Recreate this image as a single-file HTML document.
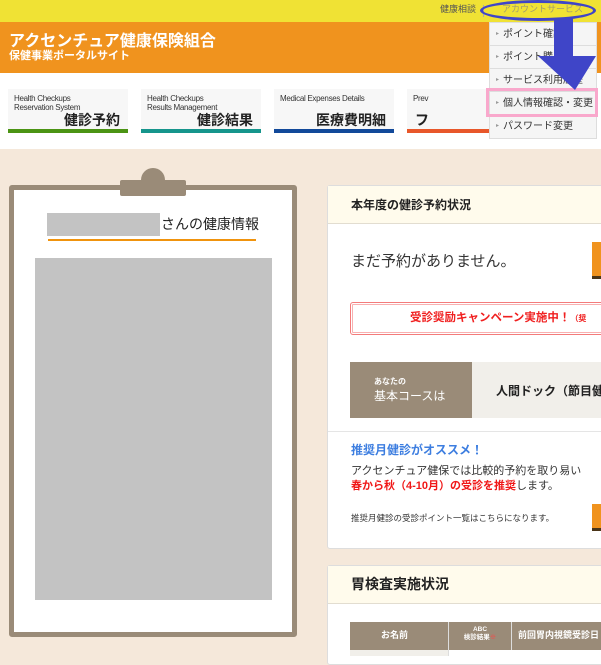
<!DOCTYPE html>
<html><head><meta charset="utf-8"><style>
*{margin:0;padding:0;box-sizing:border-box}
body{width:601px;height:656px;overflow:hidden;background:#f5e8da;font-family:"Liberation Sans","Noto Sans CJK JP",sans-serif;position:relative;color:#333;line-height:1.2}
.a{position:absolute;white-space:nowrap}
.card{position:absolute;top:89px;width:120px;height:44px;background:#f7f7f7;border-bottom:4px solid}
.card .en{position:absolute;left:6px;top:5px;font-size:8px;line-height:9px;color:#333;letter-spacing:-0.3px}
.card .jp{position:absolute;right:8px;top:23px;font-size:14px;line-height:16px;font-weight:bold;color:#222}
.dd{position:absolute;left:489px;top:22px;width:108px;background:#f5f5f5;border:1px solid #ddd}
.dd div{height:23px;border-bottom:1px solid #ddd;font-size:10px;line-height:22px;padding-left:6px;color:#333;white-space:nowrap;overflow:hidden}
.dd div:before{content:"▸";font-size:6px;color:#999;margin-right:4px;vertical-align:2px}
</style></head><body>
<div class="a" style="left:0;top:0;width:601px;height:22px;background:#f0e234"></div>
<div class="a" style="left:440px;top:4px;font-size:9px;color:#555">健康相談</div>
<div class="a" style="left:483px;top:5px;width:1px;height:12px;background:#aaa"></div>
<div class="a" style="left:502px;top:4px;font-size:9px;color:#a09a70">アカウントサービス</div>
<div class="a" style="left:0;top:22px;width:601px;height:51px;background:#f0931e"></div>
<div class="a" style="left:9px;top:32px;font-size:16px;line-height:19px;font-weight:bold;color:#fff">アクセンチュア健康保険組合</div>
<div class="a" style="left:9px;top:50px;font-size:11px;line-height:13px;font-weight:bold;color:#fff">保健事業ポータルサイト</div>
<div class="a" style="left:0;top:73px;width:601px;height:76px;background:#fff"></div>
<div class="card" style="left:8px;border-color:#4b9414"><div class="en">Health Checkups<br>Reservation System</div><div class="jp">健診予約</div></div>
<div class="card" style="left:141px;border-color:#16958c"><div class="en">Health Checkups<br>Results Management</div><div class="jp">健診結果</div></div>
<div class="card" style="left:274px;border-color:#12499a"><div class="en">Medical Expenses Details</div><div class="jp">医療費明細</div></div>
<div class="card" style="left:407px;border-color:#e8572a"><div class="en">Prev</div><div class="jp" style="left:8px;right:auto">フ</div></div>
<div class="dd"><div>ポイント確認</div><div>ポイント購入</div><div>サービス利用履歴</div><div>個人情報確認・変更</div><div style="border:none">パスワード変更</div></div>
<div class="a" style="left:486px;top:88px;width:112px;height:29px;border:3px solid #f9a8cc"></div>
<div class="a" style="left:480px;top:0px;width:116px;height:21px;border:3px solid #3f45c8;border-radius:50%"></div>
<svg class="a" style="left:530px;top:14px" width="70" height="80"><polygon points="24,4 43,4 43,42 66,42 45,76 8,42 24,42" fill="#3f45c8"/></svg>

<div class="a" style="left:9px;top:185px;width:288px;height:452px;border:5px solid #9a8b78;border-radius:3px;background:#fff"></div>
<div class="a" style="left:141px;top:168px;width:24px;height:24px;border-radius:50%;background:#9a8b78"></div>
<div class="a" style="left:120px;top:180px;width:66px;height:16px;background:#9a8b78;border-radius:2px"></div>
<div class="a" style="left:47px;top:213px;width:113px;height:23px;background:#c3c3c3"></div>
<div class="a" style="left:161px;top:216px;font-size:14px;color:#222">さんの健康情報</div>
<div class="a" style="left:48px;top:239px;width:208px;height:2px;background:#f0930d"></div>
<div class="a" style="left:35px;top:258px;width:237px;height:342px;background:#c3c3c3"></div>

<div class="a" style="left:327px;top:185px;width:290px;height:364px;background:#fff;border:1px solid #ddd;border-radius:3px"></div>
<div class="a" style="left:328px;top:186px;width:280px;height:38px;background:#fffbec;border-bottom:1px solid #e2ddd0"></div>
<div class="a" style="left:351px;top:198px;font-size:12px;font-weight:bold;color:#222">本年度の健診予約状況</div>
<div class="a" style="left:351px;top:253px;font-size:15px;color:#333">まだ予約がありません。</div>
<div class="a" style="left:592px;top:242px;width:12px;height:37px;background:#f0931e;border-bottom:3px solid #4a3518"></div>
<div class="a" style="left:350px;top:302px;width:260px;height:33px;border:1px solid #f37b7b;box-shadow:inset 0 0 0 1px #fff,inset 0 0 0 2px #f9b0b0;border-radius:3px"></div>
<div class="a" style="left:410px;top:312px;font-size:11.5px;font-weight:bold;color:#f02020">受診奨励キャンペーン実施中！<span style="font-size:8px">（奨</span></div>
<div class="a" style="left:350px;top:362px;width:122px;height:56px;background:#9a8b78"></div>
<div class="a" style="left:472px;top:362px;width:140px;height:56px;background:#f1efea"></div>
<div class="a" style="left:374px;top:377px;font-size:8px;color:#fff;font-weight:bold">あなたの</div>
<div class="a" style="left:374px;top:389px;font-size:12px;color:#fff">基本コースは</div>
<div class="a" style="left:496px;top:384px;font-size:12px;font-weight:bold;color:#222">人間ドック（節目健</div>
<div class="a" style="left:328px;top:431px;width:280px;height:1px;background:#e5e5e5"></div>
<div class="a" style="left:351px;top:443px;font-size:12px;font-weight:bold;color:#3d7ee0">推奨月健診がオススメ！</div>
<div class="a" style="left:351px;top:465px;font-size:11px;color:#333">アクセンチュア健保では比較的予約を取り易い</div>
<div class="a" style="left:351px;top:480px;font-size:11px;color:#333"><b style="color:#f01818">春から秋（4-10月）の受診を推奨</b>します。</div>
<div class="a" style="left:351px;top:513px;font-size:8.5px;color:#333">推奨月健診の受診ポイント一覧はこちらになります。</div>
<div class="a" style="left:592px;top:504px;width:12px;height:27px;background:#f0931e;border-bottom:3px solid #4a3518"></div>

<div class="a" style="left:327px;top:565px;width:290px;height:100px;background:#fff;border:1px solid #ddd;border-radius:3px"></div>
<div class="a" style="left:328px;top:566px;width:280px;height:38px;background:#fffbec;border-bottom:1px solid #e2ddd0"></div>
<div class="a" style="left:351px;top:576px;font-size:14px;font-weight:bold;color:#222">胃検査実施状況</div>
<div class="a" style="left:350px;top:622px;width:260px;height:34px;background:#9a8b78"></div>
<div class="a" style="left:448px;top:622px;width:1px;height:34px;background:#ddd"></div>
<div class="a" style="left:511px;top:622px;width:1px;height:34px;background:#ddd"></div>
<div class="a" style="left:350px;top:650px;width:98px;height:6px;background:#f1efea"></div>
<div class="a" style="left:449px;top:650px;width:160px;height:6px;background:#fff"></div>
<div class="a" style="left:381px;top:630px;font-size:9px;font-weight:bold;color:#fff">お名前</div>
<div class="a" style="left:460px;top:626px;font-size:6.5px;font-weight:bold;color:#fff;text-align:center;width:40px;line-height:8px">ABC<br>検診結果<span style="color:#f44">※</span></div>
<div class="a" style="left:518px;top:630px;font-size:9px;font-weight:bold;color:#fff">前回胃内視鏡受診日</div>
</body></html>
